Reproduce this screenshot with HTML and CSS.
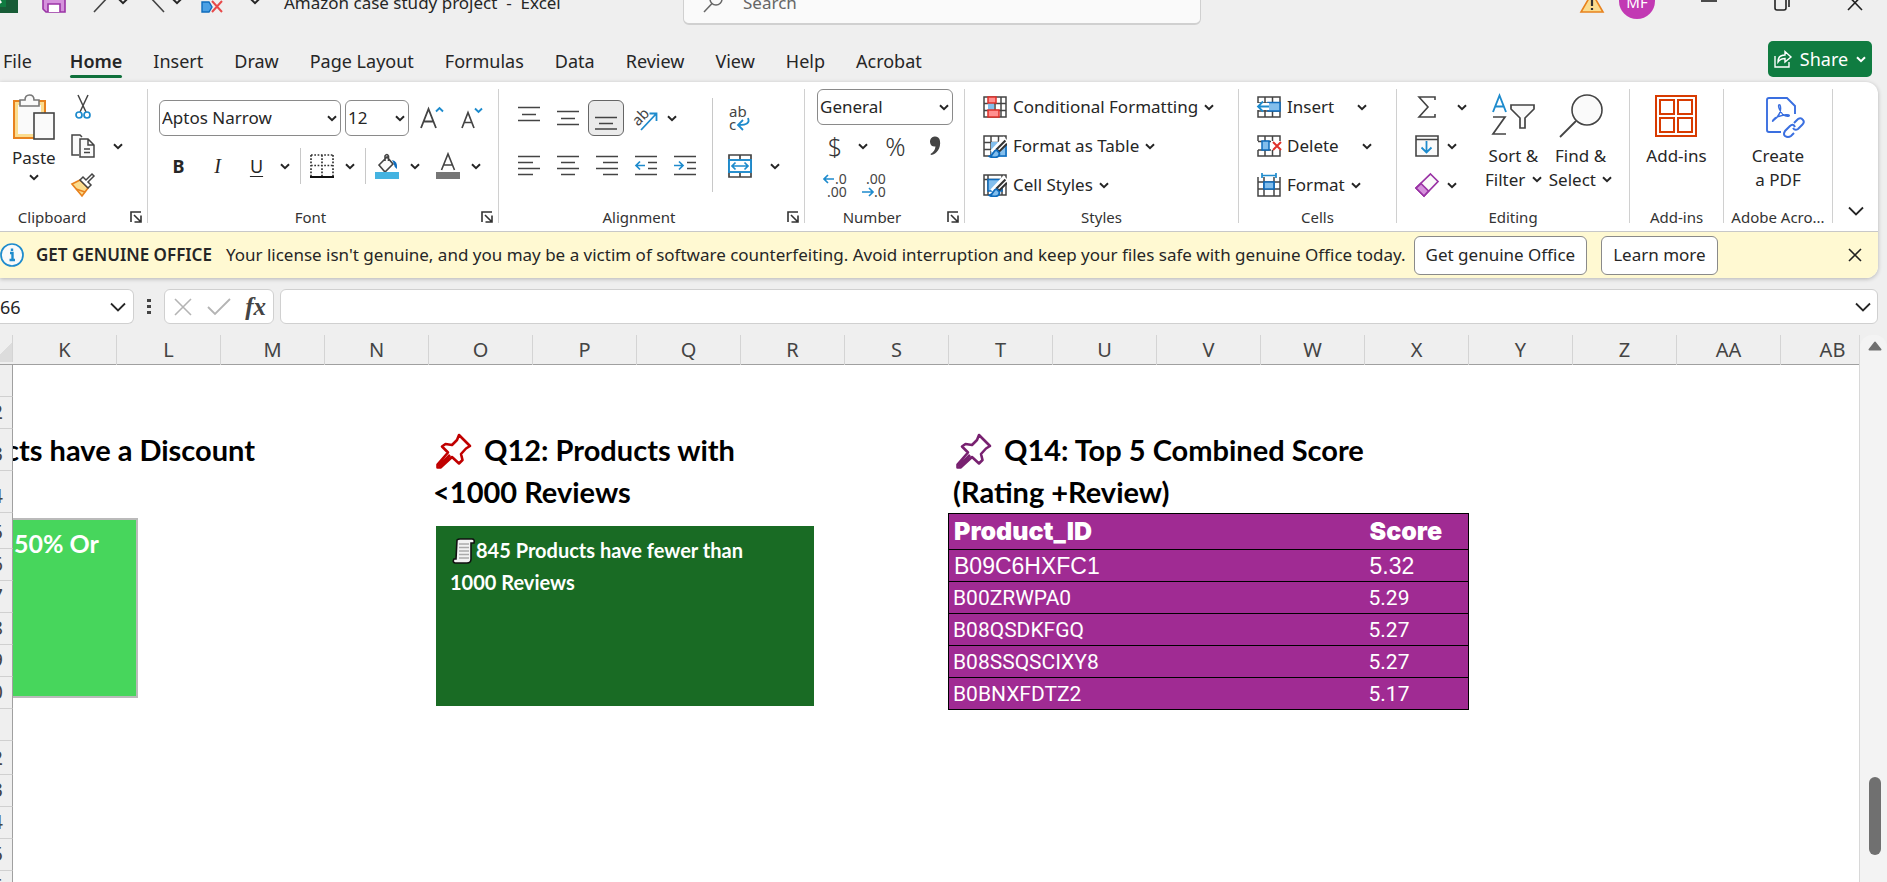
FILE: index.html
```html
<!DOCTYPE html>
<html lang="en">
<head>
<meta charset="utf-8">
<title>Amazon case study project - Excel</title>
<link rel="stylesheet" href="styles.css">
</head>
<body>
<svg class="defs" aria-hidden="true">
  <symbol id="chev" viewBox="0 0 10 7"><path d="M1 1.2 5 5.2 9 1.2" fill="none" stroke="currentColor" stroke-width="2"/></symbol>
  <symbol id="chev-lg" viewBox="0 0 16 10"><path d="M1 1.5 8 8.5 15 1.5" fill="none" stroke="currentColor" stroke-width="1.8"/></symbol>
  <symbol id="launch" viewBox="0 0 12 12"><path d="M1 11V1H11M4 4 10.5 10.5M11 4.500V11H4.500" fill="none" stroke="currentColor" stroke-width="1.6"/></symbol>
  <symbol id="pin" viewBox="0 0 38 38"><path d="M24 3 35 14 31 16.500 26 22 27.500 28 24 31.500 17 25 5.500 35.500 2.500 35.500 2.500 32.500 13 20.500 7 14.500 10.500 12 17 13 22 8ZM4 34 15 23" fill="none" stroke="currentColor" stroke-width="2.600" stroke-linejoin="round"/></symbol>
  <symbol id="brushcell" viewBox="0 0 12 12"><path d="M11 1 5.500 6.500 7 8 12 3" fill="#fff" stroke="#333" stroke-width="1.300"/><path d="M5.500 7C3 7 4 10 1 11 4 12.500 8 11.500 7 8.500Z" fill="#83beec" stroke="#0f6cbd" stroke-width="1.200"/></symbol>
</svg>

<header class="titlebar">
  <div class="quick">
    <svg class="logo" viewBox="0 0 30 30"><rect width="30" height="30" rx="2" fill="#21a366"/><path d="M0 15H30V30H0Z" fill="#185c37"/><rect y="6" width="18" height="18" fill="#107c41"/><path d="M5 10 13 20M13 10 5 20" stroke="#fff" stroke-width="2.600"/></svg>
    <button aria-label="Save"><svg width="24" height="24" viewBox="0 0 24 24"><path d="M1 1H23V23H4L1 20Z" fill="#d592dc" stroke="#9a33a5" stroke-width="1.600"/><path d="M6 23V15H18V23" fill="#fff" stroke="#9a33a5" stroke-width="1.600"/></svg></button>
    <button class="undo" aria-label="Undo"><svg width="24" height="24" viewBox="0 0 24 24"><path d="M3 -4V5H12M3 5 10 -1C17 -4 22 2 18 8L4 23" fill="none" stroke="#444" stroke-width="1.600"/></svg></button>
    <button class="dd" aria-label="Undo list"><svg><use href="#chev"/></svg></button>
    <button aria-label="Redo"><svg width="24" height="24" viewBox="0 0 24 24"><path d="M21 -4V5H12M21 5 14 -1C7 -4 2 2 6 8L20 23" fill="none" stroke="#444" stroke-width="1.600"/></svg></button>
    <button class="dd" aria-label="Redo list"><svg><use href="#chev"/></svg></button>
    <button class="del" aria-label="Delete cells"><svg width="24" height="24" viewBox="0 0 24 24"><path d="M1 10V2H22V10M10 2V9M1 9H20" fill="none" stroke="#555" stroke-width="1.500"/><path d="M2 13H9L12 18 9 23H2Z" fill="#4ba0e4" stroke="#0f6cbd" stroke-width="1.400"/><path d="M12 12 22 23M22 12 12 23" stroke="#e84a4a" stroke-width="2"/></svg></button>
    <button class="dd more" aria-label="Customize"><svg><use href="#chev"/></svg></button>
    <span class="doc">Amazon case study project&nbsp; -&nbsp; Excel</span>
  </div>
  <label class="search"><svg width="20" height="22" viewBox="0 0 20 22"><circle cx="13" cy="7" r="6" fill="none" stroke="#666" stroke-width="1.500"/><path d="M9 11.500 1 20" stroke="#666" stroke-width="1.500"/></svg><input type="text" placeholder="Search" aria-label="Search"></label>
  <div class="window">
    <svg width="24" height="22" viewBox="0 0 24 22"><path d="M12 1 23 20H1Z" fill="#fbdc8e" stroke="#e8821e" stroke-width="1.600"/><path d="M12 7V14M12 16V18" stroke="#333" stroke-width="2.200"/></svg>
    <span class="avatar">MF</span>
    <button class="win" aria-label="Minimize"><svg width="16" height="16" viewBox="0 0 16 16"><path d="M0 6H16" stroke="#222" stroke-width="1.600"/></svg></button>
    <button class="win" aria-label="Restore"><svg width="16" height="16" viewBox="0 0 16 16"><rect x="1" y="3" width="11" height="12" rx="2" fill="none" stroke="#222" stroke-width="1.600"/><path d="M5 1H12Q15 1 15 4V12" fill="none" stroke="#222" stroke-width="1.600"/></svg></button>
    <button class="win" aria-label="Close"><svg width="16" height="16" viewBox="0 0 16 16"><path d="M1 0.500 15 15M15 0.500 1 15" stroke="#222" stroke-width="1.600"/></svg></button>
  </div>
</header>

<nav class="tabs">
  <button class="file">File</button><button class="on">Home</button><button>Insert</button><button>Draw</button><button>Page Layout</button><button>Formulas</button><button>Data</button><button>Review</button><button>View</button><button>Help</button><button>Acrobat</button>
  <button class="share"><svg width="18" height="18" viewBox="0 0 18 18"><path d="M1 6V17H15V12M4 12C4 7 7 5 11 5V1.500L17 7 11 12V8.500C8 8.500 6 9 4 12Z" fill="none" stroke="#fff" stroke-width="1.400"/></svg>Share<svg class="c"><use href="#chev"/></svg></button>
</nav>

<main class="panel">
<div class="ribbon">
  <section class="group opts first-group">
    <div class="body clip">
      <button class="big paste"><svg width="42" height="46" viewBox="0 0 42 46"><rect x="1" y="7" width="31" height="37" fill="#fbdc8e" stroke="#e8821e" stroke-width="2"/><rect x="5" y="11" width="23" height="29" fill="#fafafa"/><path d="M7 12V6H12Q12 1 16.500 1T21 6H26V12Z" fill="#fafafa" stroke="#777" stroke-width="1.600"/><rect x="21" y="19" width="20" height="26" fill="#fafafa" stroke="#444" stroke-width="1.600"/></svg><span>Paste</span><svg class="c"><use href="#chev"/></svg></button>
      <div class="col clipcol">
        <button aria-label="Cut"><svg width="24" height="24" viewBox="0 0 24 24"><path d="M7 0 15 17M17 0 9 17" stroke="#444" stroke-width="1.500"/><circle cx="8" cy="20" r="3" fill="none" stroke="#1e8bcd" stroke-width="1.700"/><circle cx="16" cy="20" r="3" fill="none" stroke="#1e8bcd" stroke-width="1.700"/></svg></button>
        <button aria-label="Copy"><svg width="24" height="24" viewBox="0 0 24 24"><path d="M8 21H1V1H9L11 3" fill="#fafafa" stroke="#444" stroke-width="1.500"/><path d="M9 5H17L23 11V23H9ZM17 5V11H23M13 15H19M13 18.500H19" fill="#fafafa" stroke="#444" stroke-width="1.500"/></svg></button>
        <button aria-label="Format painter"><svg width="24" height="24" viewBox="0 0 24 24"><path d="M1 11 9 7 17 15 11 23Z" fill="#fbdc8e" stroke="#e8821e" stroke-width="1.700"/><path d="M5 16 14 19" stroke="#e8821e" stroke-width="1.500"/><path d="M9 7 12 4 15 7 21 1 23 3 17 9 20 12 17 15Z" fill="#fff" stroke="#444" stroke-width="1.500"/></svg></button>
      </div>
      <button class="dd" aria-label="Copy options"><svg><use href="#chev"/></svg></button>
    </div>
    <footer><span>Clipboard</span><button class="launch" aria-label="Clipboard options"><svg><use href="#launch"/></svg></button></footer>
  </section>

  <section class="group opts">
    <div class="body font">
      <div class="row">
        <label class="combo name"><input type="text" value="Aptos Narrow" aria-label="Font"><svg class="c"><use href="#chev"/></svg></label>
        <label class="combo size"><input type="text" value="12" aria-label="Font size"><svg class="c"><use href="#chev"/></svg></label>
        <button class="ib grow" aria-label="Increase font size"><svg width="24" height="24" viewBox="0 0 24 24"><path d="M1 22 8.500 3 16 22M4 15.500H13" fill="none" stroke="#444" stroke-width="1.800"/><path d="M16 5.500 19.500 2 23 5.500" fill="none" stroke="#1e8bcd" stroke-width="1.900"/></svg></button>
        <button class="ib" aria-label="Decrease font size"><svg width="24" height="24" viewBox="0 0 24 24"><path d="M3 22 9 6.500 15 22M5.500 16.500H13" fill="none" stroke="#444" stroke-width="1.700"/><path d="M16 2.500 19.500 6 23 2.500" fill="none" stroke="#1e8bcd" stroke-width="1.900"/></svg></button>
      </div>
      <div class="row">
        <button class="ib ltr bold">B</button><button class="ib ltr ital">I</button><button class="ib ltr und">U</button><button class="dd" aria-label="Underline styles"><svg><use href="#chev"/></svg></button>
        <span class="sep"></span>
        <button class="ib" aria-label="Borders"><svg width="24" height="24" viewBox="0 0 24 24"><path d="M1 1V22M23 1V22M12 1V22M1 1H23M1 11.500H23" fill="none" stroke="#333" stroke-width="1.700" stroke-dasharray="1.700 1.600"/><path d="M0 23H24" stroke="#111" stroke-width="2"/></svg></button><button class="dd" aria-label="Border styles"><svg><use href="#chev"/></svg></button>
        <span class="sep"></span>
        <button class="ib" aria-label="Fill colour"><svg width="24" height="26" viewBox="0 0 24 26"><path d="M4 12 12 4 18 11 10 19ZM10 8V3Q12 0 13.500 3V8" fill="#fafafa" stroke="#444" stroke-width="1.600"/><path d="M17 7Q23 8 22 16 19 14 18.500 10Z" fill="#0f6cbd"/><rect y="19" width="24" height="7" fill="#44b3e1"/></svg></button><button class="dd" aria-label="Fill colours"><svg><use href="#chev"/></svg></button>
        <button class="ib fc" aria-label="Font colour"><svg width="24" height="26" viewBox="0 0 24 26"><path d="M5.500 17 12 1 18.500 17M8 12H16" fill="none" stroke="#444" stroke-width="1.600"/><rect y="19" width="24" height="7" fill="#767676"/></svg></button><button class="dd" aria-label="Font colours"><svg><use href="#chev"/></svg></button>
      </div>
    </div>
    <footer><span>Font</span><button class="launch" aria-label="Font options"><svg><use href="#launch"/></svg></button></footer>
  </section>

  <section class="group opts">
    <div class="body align">
      <div class="col alrows">
        <div class="row">
          <button class="ib" aria-label="Top align"><svg width="22" height="24" viewBox="0 0 22 24"><path d="M0 1.500H22M4 8.500H18M0 14.500H22" stroke="#444" stroke-width="1.600"/></svg></button>
          <button class="ib" aria-label="Middle align"><svg width="22" height="24" viewBox="0 0 22 24"><path d="M0 5.500H22M4 12.500H18M0 18.500H22" stroke="#444" stroke-width="1.600"/></svg></button>
          <button class="ib sel" aria-label="Bottom align"><svg width="22" height="24" viewBox="0 0 22 24"><path d="M0 11.500H22M4 17.500H18M0 23H22" stroke="#444" stroke-width="1.600"/></svg></button>
          <button class="ib" aria-label="Orientation"><svg width="26" height="26" viewBox="0 0 26 26"><text x="0" y="18" transform="rotate(-45 7 14)" class="t15">ab</text><path d="M8 25 23 9M16.500 8.500H23.500V16" fill="none" stroke="#1e8bcd" stroke-width="1.800"/></svg></button>
          <button class="dd" aria-label="Orientation options"><svg><use href="#chev"/></svg></button>
        </div>
        <div class="row">
          <button class="ib" aria-label="Align left"><svg width="22" height="22" viewBox="0 0 22 22"><path d="M0 1.500H22M0 7.500H15M0 13.500H22M0 19.500H15" stroke="#444" stroke-width="1.600"/></svg></button>
          <button class="ib" aria-label="Center"><svg width="22" height="22" viewBox="0 0 22 22"><path d="M0 1.500H22M4 7.500H18M0 13.500H22M4 19.500H18" stroke="#444" stroke-width="1.600"/></svg></button>
          <button class="ib" aria-label="Align right"><svg width="22" height="22" viewBox="0 0 22 22"><path d="M0 1.500H22M7 7.500H22M0 13.500H22M7 19.500H22" stroke="#444" stroke-width="1.600"/></svg></button>
          <button class="ib" aria-label="Decrease indent"><svg width="22" height="22" viewBox="0 0 22 22"><path d="M0 1.500H22M13 7.500H22M13 13.500H22M0 19.500H22" stroke="#444" stroke-width="1.600"/><path d="M10 10.500H1M5 6.500 1 10.500 5 14.500" fill="none" stroke="#1e8bcd" stroke-width="1.700"/></svg></button>
          <button class="ib" aria-label="Increase indent"><svg width="22" height="22" viewBox="0 0 22 22"><path d="M0 1.500H22M13 7.500H22M13 13.500H22M0 19.500H22" stroke="#444" stroke-width="1.600"/><path d="M0 10.500H9M5 6.500 9 10.500 5 14.500" fill="none" stroke="#1e8bcd" stroke-width="1.700"/></svg></button>
        </div>
      </div>
      <span class="sep tall"></span>
      <div class="col alrows">
        <div class="row"><button class="ib wrap" aria-label="Wrap text"><svg width="24" height="28" viewBox="0 0 24 28"><text x="1" y="13" class="t15">ab</text><text x="1" y="26" class="t15">c</text><path d="M20 14Q23 21 11 21M15 16 10 21 15 26" fill="none" stroke="#1e8bcd" stroke-width="1.800"/></svg></button></div>
        <div class="row"><button class="ib" aria-label="Merge and center"><svg width="24" height="24" viewBox="0 0 24 24"><path d="M1 1H23V23H1ZM12 1V6M12 18V23" fill="none" stroke="#444" stroke-width="1.700"/><rect x="1" y="6" width="22" height="12" fill="#fff" stroke="#1e8bcd" stroke-width="1.900"/><path d="M4 12H20M7.500 8.500 4 12 7.500 15.500M16.500 8.500 20 12 16.500 15.500" fill="none" stroke="#1e8bcd" stroke-width="1.700"/></svg></button><button class="dd wide" aria-label="Merge options"><svg><use href="#chev"/></svg></button></div>
      </div>
    </div>
    <footer><span>Alignment</span><button class="launch" aria-label="Alignment options"><svg><use href="#launch"/></svg></button></footer>
  </section>

  <section class="group opts">
    <div class="body number">
      <label class="combo"><input type="text" value="General" aria-label="Number format"><svg class="c"><use href="#chev"/></svg></label>
      <div class="row">
        <button class="ib sym">$</button><button class="dd" aria-label="Currencies"><svg><use href="#chev"/></svg></button><button class="ib sym pct">%</button><button class="ib" aria-label="Comma style"><svg width="16" height="22" viewBox="0 0 16 22"><path d="M3 7A5 5 0 0 1 13 6C14 13 10 19 4 20L3.500 19Q8 16 8.500 11.500 3.500 12 3 7Z" fill="#444"/></svg></button>
      </div>
      <div class="row dec">
        <button class="ib" aria-label="Increase decimal"><svg width="26" height="28" viewBox="0 0 26 28"><text x="12" y="13" class="t14">.0</text><text x="4" y="26" class="t14">.00</text><path d="M11 8H1M5 4 1 8 5 12" fill="none" stroke="#1e8bcd" stroke-width="1.700"/></svg></button>
        <button class="ib" aria-label="Decrease decimal"><svg width="26" height="28" viewBox="0 0 26 28"><text x="4" y="13" class="t14">.00</text><text x="12" y="26" class="t14">.0</text><path d="M0 21H11M7 17 11 21 7 25" fill="none" stroke="#1e8bcd" stroke-width="1.700"/></svg></button>
      </div>
    </div>
    <footer><span>Number</span><button class="launch" aria-label="Number options"><svg><use href="#launch"/></svg></button></footer>
  </section>

  <section class="group">
    <div class="body list">
      <button class="li"><svg width="24" height="22" viewBox="0 0 24 22"><path d="M1 1H23V21H1ZM1 7.500H23M1 14.500H23M6 1V21M12 1V21M18 1V21" fill="none" stroke="#444" stroke-width="1.500"/><rect x="5" y="7" width="6" height="8" fill="#83beec"/><rect x="5" y="1" width="8" height="6" fill="#ff9090" stroke="#e0312a" stroke-width="1.500"/><rect x="5" y="14" width="11" height="7" fill="#ff9090" stroke="#e0312a" stroke-width="1.500"/></svg>Conditional Formatting<svg class="c"><use href="#chev"/></svg></button>
      <button class="li"><svg width="24" height="22" viewBox="0 0 24 22"><path d="M1 1H23V21H1ZM1 7.500H23M1 14.500H23M8 1V21M15.500 1V21" fill="#fff" stroke="#444" stroke-width="1.500"/><path d="M8 7H24V22H8Z" fill="#83beec"/><path d="M23 7V21H15" fill="none" stroke="#0f6cbd" stroke-width="1.600"/><path d="M23 4 10 18" stroke="#fff" stroke-width="7"/><use href="#brushcell" x="5" y="4" width="19" height="19"/></svg>Format as Table<svg class="c"><use href="#chev"/></svg></button>
      <button class="li"><svg width="24" height="22" viewBox="0 0 24 22"><path d="M1 1H23V21H1ZM1 5.500H23M5 1V21M19 1V21" fill="#fff" stroke="#444" stroke-width="1.500"/><path d="M5 5.500H19V17H5Z" fill="#83beec" stroke="#0f6cbd" stroke-width="1.500"/><path d="M23 4 10 18" stroke="#fff" stroke-width="7"/><use href="#brushcell" x="5" y="4" width="19" height="19"/></svg>Cell Styles<svg class="c"><use href="#chev"/></svg></button>
    </div>
    <footer><span>Styles</span></footer>
  </section>

  <section class="group">
    <div class="body list">
      <button class="li"><svg width="24" height="22" viewBox="0 0 24 22"><path d="M1 1H23V21H1ZM1 7H23M1 15H23M8 1V21M15.500 1V21" fill="#fff" stroke="#444" stroke-width="1.500"/><path d="M11 6.500H23V15H11Z" fill="#83beec" stroke="#0f6cbd" stroke-width="1.500"/><path d="M12 10.500H0" stroke="#fff" stroke-width="7"/><path d="M12 10.500H1M6 5.500 1 10.500 6 15.500" fill="none" stroke="#1e8bcd" stroke-width="1.800"/></svg>Insert<svg class="c far"><use href="#chev"/></svg></button>
      <button class="li"><svg width="24" height="22" viewBox="0 0 24 22"><path d="M1 6V1H23V6M1 6.500H14M1 15H14M1 15V21H23V15M8 1V6M15.500 1V6M8 15V21M15.500 15V21" fill="none" stroke="#444" stroke-width="1.500"/><path d="M5 6H12V15H5Z" fill="#83beec" stroke="#0f6cbd" stroke-width="1.500"/><path d="M16 7 24 15M24 7 16 15" stroke="#e0312a" stroke-width="2"/></svg>Delete<svg class="c far"><use href="#chev"/></svg></button>
      <button class="li"><svg width="24" height="24" viewBox="0 0 24 24"><path d="M1 4V23H23V4M1 9H23M1 16H23M7 4V23M17 4V23" fill="#fff" stroke="#444" stroke-width="1.500"/><path d="M7 9H17V16H7Z" fill="#83beec" stroke="#0f6cbd" stroke-width="1.700"/><path d="M5 2.500H19M5 0V5M19 0V5" stroke="#1e8bcd" stroke-width="1.700"/></svg>Format<svg class="c"><use href="#chev"/></svg></button>
    </div>
    <footer><span>Cells</span></footer>
  </section>

  <section class="group">
    <div class="body edit">
      <div class="list slim">
        <button class="li sum" aria-label="AutoSum"><svg width="24" height="22" viewBox="0 0 24 22"><path d="M20 4V1H4L13 11 4 21H20V18" fill="none" stroke="#444" stroke-width="1.600"/></svg><svg class="c"><use href="#chev"/></svg></button>
        <button class="li" aria-label="Fill"><svg width="24" height="22" viewBox="0 0 24 22"><path d="M1 1H23V21H1ZM1 4.500H23" fill="#fafafa" stroke="#444" stroke-width="1.600"/><path d="M11.500 6V17M6.500 12.500 11.500 17.500 16.500 12.500" fill="none" stroke="#1e8bcd" stroke-width="1.800"/></svg><svg class="c"><use href="#chev"/></svg></button>
        <button class="li" aria-label="Clear"><svg width="24" height="24" viewBox="0 0 24 24"><path d="M15.500 1 23 8.500 9 23 1 15Z" fill="#fafafa" stroke="#9a33a5" stroke-width="1.700"/><path d="M6 10.500 13.500 18 9 23 1 15Z" fill="#d592dc" stroke="#9a33a5" stroke-width="1.700"/></svg><svg class="c"><use href="#chev"/></svg></button>
      </div>
      <button class="big"><svg width="44" height="44" viewBox="0 0 44 44"><path d="M2 18 8.500 1.500 15 18M4 12.500H13" fill="none" stroke="#1e8bcd" stroke-width="1.900"/><path d="M2 23H14L2 40H15" fill="none" stroke="#444" stroke-width="1.700"/><path d="M20 11H43V15L34 24V34H29V24L20 15Z" fill="#fafafa" stroke="#444" stroke-width="1.700"/></svg><span>Sort &amp;<br>Filter <svg class="c"><use href="#chev"/></svg></span></button>
      <button class="big"><svg width="44" height="44" viewBox="0 0 44 44"><circle cx="28" cy="16" r="15" fill="#fafafa" stroke="#444" stroke-width="1.600"/><path d="M17 27 1 43" stroke="#444" stroke-width="1.800"/></svg><span>Find &amp;<br>Select <svg class="c"><use href="#chev"/></svg></span></button>
    </div>
    <footer><span>Editing</span></footer>
  </section>

  <section class="group">
    <div class="body mid">
      <button class="big"><svg width="42" height="44" viewBox="0 0 42 44"><path d="M1 2H41V42H1ZM5 6H19V20H5ZM23 6H37V20H23ZM5 24H19V38H5ZM23 24H37V38H23Z" fill="#fff" stroke="#d83b01" stroke-width="2"/></svg><span>Add-ins</span></button>
    </div>
    <footer><span>Add-ins</span></footer>
  </section>

  <section class="group">
    <div class="body mid">
      <button class="big pdf"><svg width="40" height="44" viewBox="0 0 40 44"><path d="M16 38H4Q2 38 2 36V6Q2 4 4 4H22L30 12V20" fill="none" stroke="#3a6fe0" stroke-width="1.900"/><path d="M8 27C14 23 17 16 15 11 14 10 13 11 14 14 16 20 20 23 24 22 26 20 18 20 10 24 6 27 8 28 8 27Z" fill="none" stroke="#3a6fe0" stroke-width="1.400"/><path d="M29 29 33 25Q36 23 38 26 40 28 37 31L33 35Q30 37 28 34M30 33Q28 29 25 32L20 37Q18 40 20 42 23 44 26 42L29 39" fill="none" stroke="#3a6fe0" stroke-width="2"/></svg><span>Create<br>a PDF</span></button>
    </div>
    <footer><span>Adobe Acro...</span></footer>
  </section>
  <button class="collapse" aria-label="Collapse ribbon"><svg width="16" height="10"><use href="#chev-lg"/></svg></button>
</div>

<div class="notice">
  <svg width="24" height="24" viewBox="0 0 24 24"><circle cx="12" cy="12" r="11" fill="#fafafa" stroke="#1e8bcd" stroke-width="1.700"/><path d="M10 10H12.500V17M12 5.500V8M9.500 17H15" fill="none" stroke="#1e8bcd" stroke-width="2.400"/></svg>
  <strong>GET GENUINE OFFICE</strong>
  <span>Your license isn't genuine, and you may be a victim of software counterfeiting. Avoid interruption and keep your files safe with genuine Office today.</span>
  <button class="pill">Get genuine Office</button>
  <button class="pill">Learn more</button>
  <button class="x" aria-label="Dismiss"><svg width="14" height="14" viewBox="0 0 14 14"><path d="M1 1 13 13M13 1 1 13" stroke="#222" stroke-width="1.600"/></svg></button>
</div>
</main>

<div class="formula">
  <label class="namebox"><input type="text" value="66" aria-label="Name box"><svg width="16" height="10"><use href="#chev-lg"/></svg></label>
  <svg class="dots" width="4" height="16" viewBox="0 0 4 16"><path d="M0 0H4V3H0ZM0 6H4V9H0ZM0 12H4V15H0Z" fill="#444"/></svg>
  <div class="fx">
    <button aria-label="Cancel"><svg width="18" height="18" viewBox="0 0 18 18"><path d="M1 1 17 17M17 1 1 17" stroke="#b4b4b4" stroke-width="1.600"/></svg></button>
    <button aria-label="Enter"><svg width="24" height="18" viewBox="0 0 24 18"><path d="M1 9 8 16 23 1" fill="none" stroke="#b4b4b4" stroke-width="1.800"/></svg></button>
    <button class="fn">fx</button>
  </div>
  <label class="entry"><input type="text" aria-label="Formula"><svg width="16" height="10"><use href="#chev-lg"/></svg></label>
</div>

<div class="work">
  <div class="sheet">
    <div class="heads"><span class="corner"></span><span>K</span><span>L</span><span>M</span><span>N</span><span>O</span><span>P</span><span>Q</span><span>R</span><span>S</span><span>T</span><span>U</span><span>V</span><span>W</span><span>X</span><span>Y</span><span>Z</span><span>AA</span><span>AB</span></div>
    <div class="cells">
      <span class="rn">1</span><span class="rn">2</span><span class="rn">3</span><span class="rn">4</span><span class="rn">5</span><span class="rn">6</span><span class="rn">7</span><span class="rn">8</span><span class="rn">9</span><span class="rn">0</span><span class="rn">1</span><span class="rn">2</span><span class="rn">3</span><span class="rn">4</span><span class="rn">5</span><span class="rn">6</span>
      <h2 class="q q11"><span>cts have a Discount</span></h2>
      <h2 class="q q12"><svg class="pin red"><use href="#pin"/></svg>Q12: Products with<br>&lt;1000 Reviews</h2>
      <h2 class="q q14"><svg class="pin purple"><use href="#pin"/></svg>Q14: Top 5 Combined Score<br>(Rating +Review)</h2>
      <div class="card lime">50% Or</div>
      <div class="card green"><svg width="24" height="26" viewBox="0 0 24 26"><path d="M5 2Q6 1 8 1H20Q23 1 22 5H19V21Q19 25 15 25H3Q0 24 2 21H4Z" fill="#f2f2f2" stroke="#111" stroke-width="1.600"/><path d="M7 6H17M7 9.500H17M7 13H17M7 16.500H17M7 20H17" stroke="#aaa" stroke-width="1.500"/></svg>845 Products have fewer than<br>1000 Reviews</div>
      <table class="scores">
        <thead><tr><th>Product_ID</th><th>Score</th></tr></thead>
        <tbody>
          <tr class="first"><td>B09C6HXFC1</td><td>5.32</td></tr>
          <tr><td>B00ZRWPA0</td><td>5.29</td></tr>
          <tr><td>B08QSDKFGQ</td><td>5.27</td></tr>
          <tr><td>B08SSQSCIXY8</td><td>5.27</td></tr>
          <tr><td>B0BNXFDTZ2</td><td>5.17</td></tr>
        </tbody>
      </table>
    </div>
  </div>
  <div class="scroll"><svg width="14" height="10" viewBox="0 0 14 10"><path d="M7 1.500 12.500 8.500H1.500Z" fill="#707070" stroke="#707070" stroke-width="2" stroke-linejoin="round"/></svg><span class="thumb"></span></div>
</div>
</body>
</html>
```
FILE: styles.css
```css
* { box-sizing: border-box; }
html, body { height: 100%; }
body {
  margin: 0;
  display: flex;
  flex-direction: column;
  overflow: hidden;
  background: #efefef;
  color: #262626;
  font: 17px/24px "Noto Sans", "Open Sans", sans-serif;
}
button, input { font: inherit; color: inherit; }
button { border: 0; background: none; padding: 0; display: flex; align-items: center; justify-content: center; white-space: nowrap; }
input { border: 0; background: none; padding: 0; min-width: 0; outline: 0; }
svg { flex: none; display: block; overflow: visible; }
.defs { display: none; }
.c, .dd svg { width: 10px; height: 7px; }
.row { display: flex; align-items: center; }
.col { display: flex; flex-direction: column; }
.dd { width: 18px; height: 36px; flex: none; }
.ib { width: 39px; height: 36px; flex: none; }
.t14 { font-size: 14px; fill: #444; }
.t15 { font-size: 15px; fill: #444; }

/* Title bar: scrolled partly above the window edge */
.titlebar { flex: none; height: 56px; margin-top: -25px; padding-right: 3px; display: grid; grid-template-columns: 1fr 518px 1fr; align-items: center; }
.quick { display: flex; align-items: center; }
.logo { width: 30px; height: 30px; margin-left: -12px; margin-right: 24px; margin-bottom: 10px; }
.quick button svg { margin-bottom: 4px; }
.undo { margin-left: 24px; }
.quick .dd + button { margin-left: 12px; }
.quick .dd + .del { margin-left: 14px; }
.quick .more { margin-left: 22px; }
.doc { margin-left: 20px; white-space: nowrap; }
.search { height: 44px; background: #fafafa; border: 1px solid #d0d0d0; border-bottom-width: 2px; border-radius: 6px; display: flex; align-items: center; gap: 20px; padding: 0 19px; }
.search input::placeholder { color: #666; opacity: 1; }
.window { display: flex; align-items: center; justify-content: flex-end; padding-right: 21px; }
.avatar { width: 36px; height: 36px; border-radius: 50%; background: #c239b3; color: #fff; font-size: 15px; line-height: 38px; text-align: center; margin: 0 46px 4px 15px; }
.win + .win { margin-left: 57px; }

.tabs { flex: none; height: 51px; display: flex; align-items: center; padding: 8px 15px 0 0; font-size: 18px; }
.tabs button { margin: 0 16px 0 15px; height: 33px; position: relative; }
.tabs .file { margin: 0 23px 0 3px; }
.tabs .on { font-weight: 600; }
.tabs .on::after { content: ""; position: absolute; left: 0; right: 0; bottom: -1px; height: 3px; border-radius: 2px; background: #0f703b; }
.tabs .share { margin: 0 0 3px auto; width: 104px; height: 36px; border-radius: 5px; background: #107c41; color: #fff; gap: 8px; }

.panel { flex: none; margin-right: 9px; border-radius: 0 12px 12px 0; background: #fff; box-shadow: 0 1px 4px rgba(0,0,0,.25); overflow: hidden; }
.ribbon { height: 150px; display: grid; grid-template-columns: 148fr 351fr 306fr 160fr 274fr 158fr 233fr 94fr 109fr 45fr; border-bottom: 1px solid #c8c8c8; font-size: 17px; }
.group { display: flex; flex-direction: column; margin: 7px 0 8px; border-right: 1px solid #d0d0d0; min-width: 0; }
.body { flex: 1; display: flex; min-width: 0; }
.group footer { display: flex; align-items: center; height: 24px; font-size: 15px; line-height: 24px; text-align: center; white-space: nowrap; margin-bottom: -6px; color: #333; }
.group footer span { flex: 1; min-width: 0; }
.opts footer { padding-right: 5px; }
.first-group footer { margin-left: -18px; }
.launch { width: 12px; height: 24px; margin-left: 8px; }
.launch svg { width: 12px; height: 12px; }
.big { flex-direction: column; justify-content: flex-start; text-align: center; padding-top: 5px; line-height: 24px; }
.big > svg { margin-bottom: 6px; }
.big span .c { display: inline-block; margin: 0 0 3px 2px; }
.paste { margin: 0 15px 0 12px; }
.paste > svg { margin-bottom: 6px; }
.paste .c { margin-top: 4px; }
.clip > .dd { margin: 39px 0 0 14px; }
.clipcol { padding-top: 6px; gap: 15px; }

.combo { display: flex; align-items: center; height: 36px; border: 1px solid #8a8a8a; border-radius: 6px; padding: 0 3px 0 2px; background: #fff; }
.combo input { flex: 1; width: 0; }
.name { width: 182px; }
.size { width: 64px; margin-left: 4px; }
.font { flex-direction: column; padding: 11px 0 0 11px; gap: 12px; }
.grow { margin-left: 3px; }
.bold { font-weight: 700; font-size: 18px; }
.ital { font: italic 20px "Liberation Serif", serif; }
.und { text-decoration: underline; text-underline-offset: 3px; font-size: 18px; }
.sep { width: 1px; height: 36px; background: #c8c8c8; margin: 0 1px 0 6px; }
.sep.tall { height: 94px; margin: 9px 7px 0 8px; }
.fc { margin-left: 4px; }
.align { padding-left: 10px; }
.alrows { padding-top: 11px; gap: 12px; }
.alrows .row { height: 36px; }
.alrows .ib + .dd { margin-left: -2px; }
.sel { width: 36px; margin: 0 2px 0 1px; background: #ebebeb; border: 1px solid #666; border-radius: 6px; }
.alrows .ib + .wide { margin-left: 7px; }
.number { flex-direction: column; padding-left: 12px; }
.number .combo { width: 136px; }
.sym { font-size: 25px; font-weight: 300; color: #333; }
.number .sym:first-child { width: 36px; }
.number .dd { margin: 0 4px 0 1px; }
.number .row { margin-top: 3px; }
.dec { margin-left: -1px; }
.list { flex-direction: column; padding-left: 18px; gap: 3px; align-items: flex-start; }
.li { height: 36px; gap: 6px; }
.far { margin-left: 17px; }
.slim { display: flex; padding-left: 18px; }
.slim .li { gap: 8px; }
.slim .sum { gap: 18px; }
.edit .big { margin-left: 7px; }
.edit .list + .big { margin-left: 18px; }
.mid { justify-content: center; }
.pdf svg { margin-left: 14px; }
.collapse { align-self: end; height: 40px; }

.notice { min-height: 46px; background: #fff9d2; display: flex; align-items: center; }
.notice strong { font-weight: 600; margin: 0 14px 0 12px; white-space: nowrap; }
.notice span { white-space: nowrap; margin-right: 8px; }
.pill { height: 39px; flex: none; padding: 0 11px; background: #fff; border: 1px solid #8a8a8a; border-radius: 6px; margin-right: 14px; }
.x { margin: 0 16px 0 auto; }

.formula { flex: none; display: flex; align-items: center; margin: 11px 9px 11px 0; height: 35px; }
.namebox, .fx, .entry { height: 35px; background: #fff; border: 1px solid #d0d0d0; border-radius: 6px; display: flex; align-items: center; }
.namebox { width: 134px; padding-right: 7px; border-left: 0; border-radius: 0 6px 6px 0; font-size: 18px; }
.namebox input { flex: 1; width: 0; }
.dots { margin: 0 13px 0 13px; }
.fx { width: 110px; justify-content: space-between; padding: 0 7px 0 9px; margin-right: 6px; }
.fn { font: italic 700 25px/28px "Liberation Serif", serif; color: #444; }
.entry { flex: 1; padding: 0 6px; }
.entry input { flex: 1; }

.work { flex: 1; display: flex; min-height: 0; }
.sheet { flex: 1; min-width: 0; overflow: hidden; border-right: 1px solid #d8d8d8; background: #fff; }
.heads { display: grid; grid-template-columns: 13px repeat(18, 104px); height: 30px; border-bottom: 1px solid #a0a0a0; background: #efefef; color: #444; font-size: 20px; line-height: 30px; text-align: center; }
.heads span { border-right: 1px solid #d4d4d4; }
.heads .corner { background: linear-gradient(135deg, #efefef 50%, #dcdcdc 50%); margin-bottom: 3px; }
.cells { display: grid; grid-template-columns: 13px repeat(18, 104px); grid-template-rows: 32px 32px 42px 42px 36px 32px 32px 32px 32px 32px 32px 34px 32px 32px 32px 32px; grid-auto-flow: column; }
.rn { grid-column: 1; background: #efefef; border-right: 1px solid #a0a0a0; border-bottom: 1px solid #d0d0d0; font-size: 20px; line-height: 33px; color: #444; display: flex; align-items: flex-end; justify-content: flex-end; padding-right: 9px; overflow: hidden; }
.q { margin: 0; font: 700 29px/42px Lato, sans-serif; color: #000; white-space: nowrap; grid-row: 3 / span 2; }
.q11 { grid-column: 2 / span 3; display: flex; overflow: hidden; }
.q11 span { margin-left: -8px; }
.q12 { grid-column: 6 / span 4; padding-left: 4px; }
.q14 { grid-column: 11 / span 5; padding-left: 4px; }
.pin { display: inline-block; width: 38px; height: 38px; vertical-align: -9px; margin: 0 11px 0 2px; }
.red { color: #c00000; }
.purple { color: #782170; }
.card { color: #fff; font-family: Lato, sans-serif; font-weight: 700; }
.lime { grid-column: 2 / span 2; grid-row: 5 / span 6; width: 125px; height: 180px; margin-top: 5px; padding: 7px 0 0 1px; background: #47d65c; border: 2px solid #bababa; border-left: 0; font-size: 25px; line-height: 32px; }
.green { grid-column: 6 / span 4; grid-row: 5 / span 6; width: 378px; height: 180px; margin: 13px 0 0 7px; padding: 8px 14px; background: #196b24; font-size: 20px; line-height: 32px; }
.green svg { display: inline-block; vertical-align: -6px; margin-left: 2px; }
.scores { grid-column: 11 / span 5; grid-row: 5 / span 6; width: 521px; margin-left: -1px; border-collapse: collapse; table-layout: fixed; background: #a02b93; color: #fff; font: 21px/30px Roboto, sans-serif; align-self: start; }
.scores tr { border: 1px solid #000; }
.scores th { font: 900 25px/35px Inter, sans-serif; text-align: left; padding: 0 5px; }
.scores th:last-child { width: 104px; }
.scores td { padding: 1px 4px 0; }
.scores .first { font: 23px/30px "Liberation Sans", sans-serif; }
.scores .first td { padding: 1px 5px 0; }

.scroll { width: 27px; flex: none; background: #f3f3f3; border-radius: 12px 12px 0 0; display: flex; flex-direction: column; align-items: center; padding: 6px 0 27px 3px; }
.thumb { width: 12px; height: 78px; margin-top: auto; border-radius: 6px; background: #707070; }
```
